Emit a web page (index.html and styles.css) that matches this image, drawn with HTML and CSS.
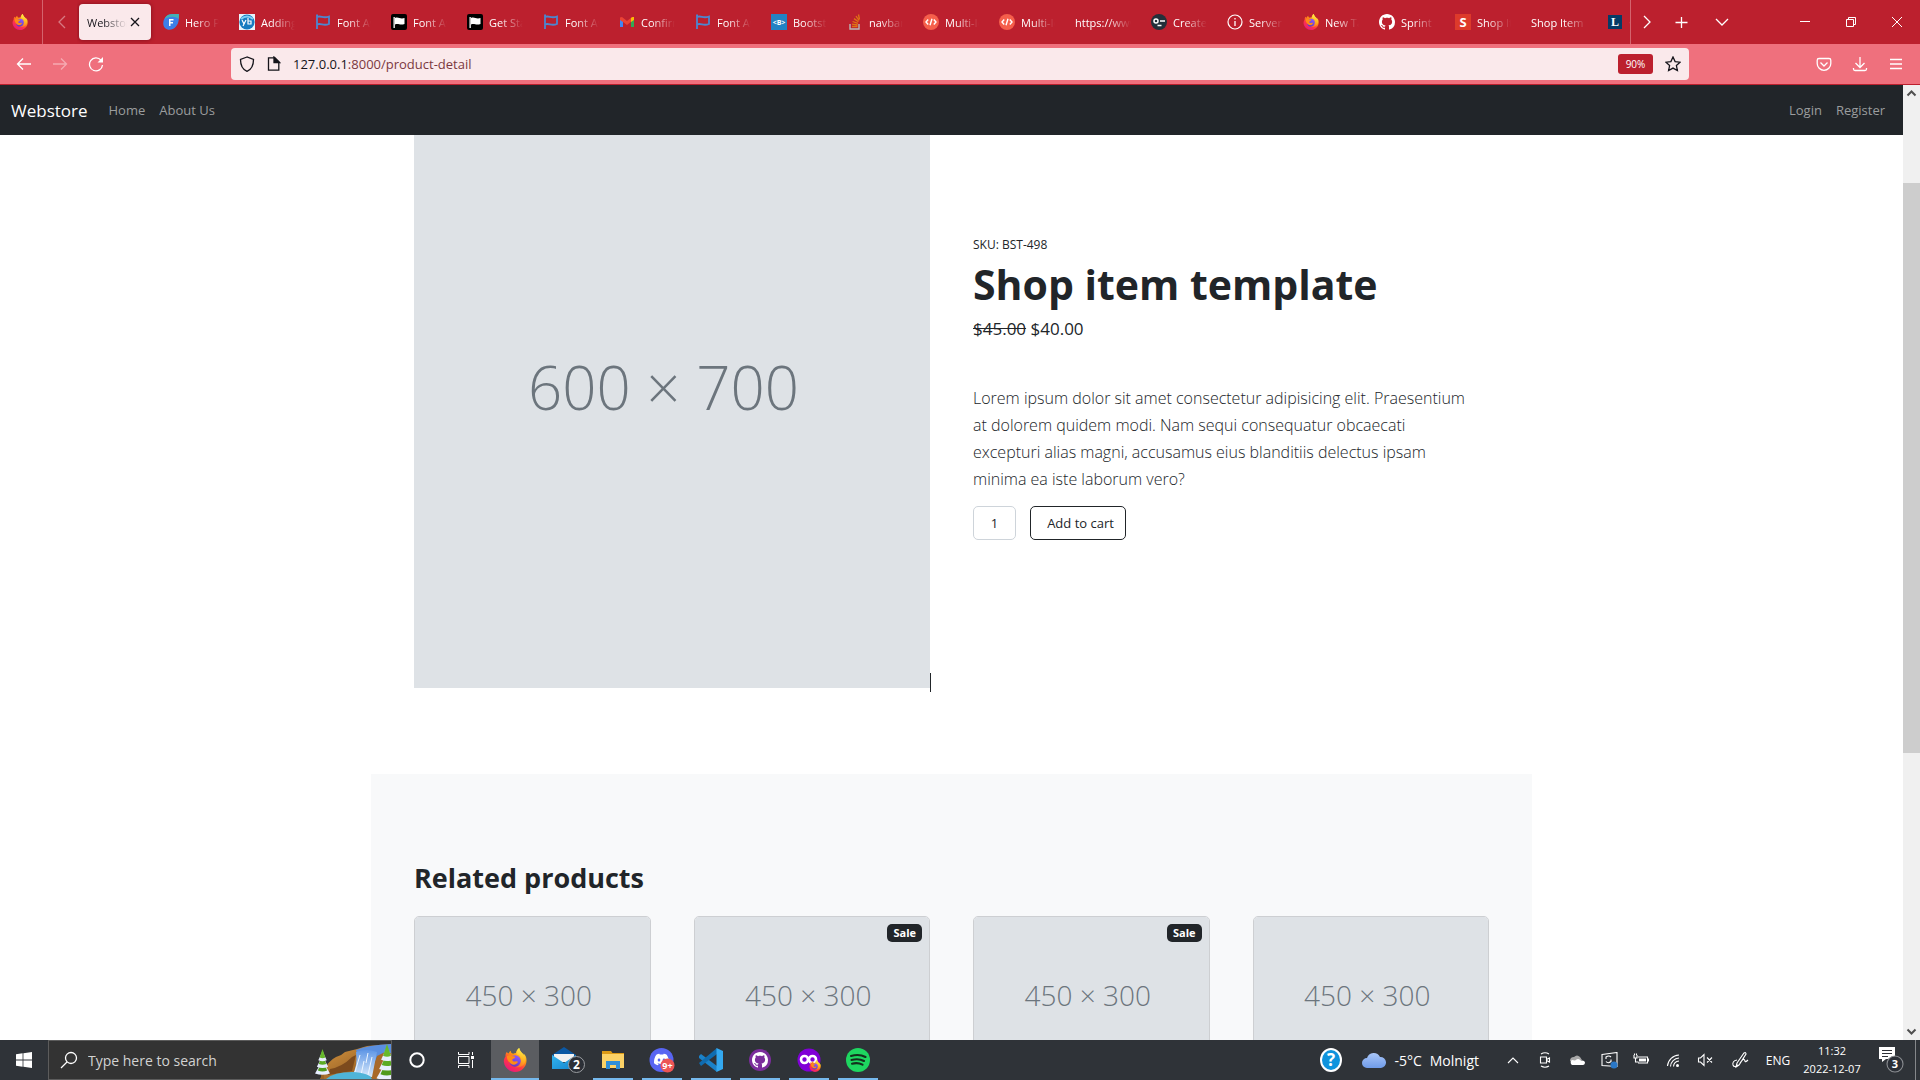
FILE: index.html
```html
<!DOCTYPE html>
<html lang="en">
<head>
<meta charset="utf-8">
<title>Webstore</title>
<link rel="stylesheet" href="styles.css">
</head>
<body>
<svg class="sprite" aria-hidden="true">
  <defs>
    <linearGradient id="fx-body" x1="0.8" y1="0" x2="0.2" y2="1">
      <stop offset="0" stop-color="#fff44f"/><stop offset="0.35" stop-color="#ff980e"/>
      <stop offset="0.65" stop-color="#ff3647"/><stop offset="1" stop-color="#e31587"/>
    </linearGradient>
    <linearGradient id="fx-flame" x1="0.6" y1="0" x2="0.4" y2="1">
      <stop offset="0" stop-color="#fff44f"/><stop offset="0.6" stop-color="#ffb01f"/><stop offset="1" stop-color="#ff6a2b"/>
    </linearGradient>
    <linearGradient id="fx-core" x1="0.7" y1="0" x2="0.3" y2="1">
      <stop offset="0" stop-color="#9059ff"/><stop offset="1" stop-color="#5b3bc4"/>
    </linearGradient>
    <linearGradient id="sky-cloud" x1="0" y1="0" x2="0" y2="1">
      <stop offset="0" stop-color="#a9c6f8"/><stop offset="1" stop-color="#6f9be8"/>
    </linearGradient>
    <linearGradient id="rock" x1="0" y1="0" x2="1" y2="1">
      <stop offset="0" stop-color="#d9983f"/><stop offset="1" stop-color="#7c4a1d"/>
    </linearGradient>
    <linearGradient id="fall" x1="0" y1="0" x2="0" y2="1">
      <stop offset="0" stop-color="#5f97e6"/><stop offset="1" stop-color="#d8e9fb"/>
    </linearGradient>
    <linearGradient id="mail-front" x1="0" y1="0" x2="1" y2="1">
      <stop offset="0" stop-color="#33b4ee"/><stop offset="1" stop-color="#1585cf"/>
    </linearGradient>
  </defs>
  <symbol id="firefox" viewBox="0 0 24 24">
    <path fill="url(#fx-body)" d="M23 9c-.6-1.500-1.800-2.900-2.700-3.400.4 1 .6 1.700.7 2.300C19.500 4.500 16.800 3.700 16.200 0c-1.800 1-3 3-3.200 5-1 .1-2 .4-2.800.8-1.800-.5-2.400-1.700-2.400-3.100-1 .5-1.700 1.600-2 2.600-.7 0-1.500-.5-2-1.300C2.700 5.200 2.300 7 2.500 8.400 1.300 10 .8 12 .8 13.600 1.400 19.500 6.200 24 12 24c6.300 0 11.400-5 11.500-11.300 0-1.300-.1-2.500-.5-3.700z"/>
    <circle cx="12" cy="13" r="5.800" fill="url(#fx-core)"/>
    <path fill="url(#fx-flame)" d="M16.200 0c-2 1.500-3.200 4-2.500 6.500 2.300.4 4.300 2.500 4.300 6 0 4-3 6.500-6 6.500 5.500 1.500 10.500-2 10.500-7.500C22.500 6 17 5 16.200 0z"/>
    <path fill="#ff8a16" d="M4 8c2-1 4-1 5.500.3 1-.1 2.500.2 2.700.9-.3 1.300-2.400 1.400-2.900 2.300-.2 1.500 1.500 2.400 3.200 1.900 1.300-.5 2-.2 2.500.4-1 2.700-4.500 3.700-7 2C5.500 14 3.500 11 4 8z"/>
  </symbol>
  <symbol id="github" viewBox="0 0 16 16"><path d="M8 0C3.580 0 0 3.580 0 8c0 3.540 2.290 6.530 5.470 7.590.4.070.55-.17.55-.38 0-.19-.01-.82-.01-1.490-2.010.37-2.530-.49-2.690-.94-.09-.23-.48-.94-.82-1.130-.28-.15-.68-.52-.01-.53.63-.01 1.080.58 1.230.82.72 1.210 1.870.87 2.330.66.07-.52.28-.87.51-1.070-1.780-.2-3.640-.89-3.640-3.950 0-.87.31-1.590.82-2.150-.08-.2-.36-1.020.08-2.120 0 0 .67-.21 2.200.82.64-.18 1.320-.27 2-.27s1.360.09 2 .27c1.530-1.040 2.200-.82 2.200-.82.44 1.100.16 1.920.08 2.120.51.56.82 1.270.82 2.150 0 3.070-1.870 3.750-3.650 3.950.29.25.54.73.54 1.480 0 1.070-.01 1.930-.01 2.200 0 .21.15.46.55.38A8.010 8.010 0 0 0 16 8c0-4.420-3.580-8-8-8z"/></symbol>
  <symbol id="flag" viewBox="0 0 16 16"><path d="M2 15V1.500h1M2 3c4-2 6 2 12-.5V10c-6 2.500-8-1.500-12 .5" fill="none" stroke="#4c86cf" stroke-width="1.800"/></symbol>
  <symbol id="flag-dark" viewBox="0 0 16 16"><rect width="16" height="16" rx="2"/><path d="M2.500 3h1.300v11H2.500zM4 4c3.500-1.500 5 1.500 9.500 0v6c-4.500 1.700-6-1-9.500.4z" fill="#fff"/></symbol>
  <symbol id="code" viewBox="0 0 16 16"><circle cx="8" cy="8" r="8" fill="#f55f4b"/><path d="M5.200 5.500 3 8l2.200 2.500M10.800 5.500 13 8l-2.200 2.500M9 4.800l-2 6.400" fill="none" stroke="#fff" stroke-width="1.400"/></symbol>
  <symbol id="tree" viewBox="0 0 16 32">
    <path fill="#9a6428" d="M6.500 25h3v7h-3z"/>
    <path fill="#e8efff" d="M8 12 0 26q8 3 16 0z"/><path fill="#4f9a1d" d="M8 12 3 23q5 2 10 0z"/>
    <path fill="#e8efff" d="M8 7 2 19q6 2.500 12 0z"/><path fill="#5cab24" d="M8 6 4 16q4 1.500 8 0z"/>
    <path fill="#e8efff" d="M8 2 3.500 12q4.500 2 9 0z"/><path fill="#67b92b" d="M8 0 5 9q3 1.500 6 0z"/>
  </symbol>
</svg>

<header class="browser">
  <div class="tabstrip">
    <div class="pinned"><svg width="16" height="16"><use href="#firefox"/></svg></div>
    <button class="scroll-tabs dim" aria-label="Scroll tabs left"><svg width="16" height="16" viewBox="0 0 16 16"><path d="M11 2 5 8l6 6"/></svg></button>
    <nav class="tabs" aria-label="Open tabs">
      <div class="tab active"><span class="tab-title">Webstore</span><button class="tab-close" aria-label="Close tab"><svg width="10" height="10" viewBox="0 0 10 10"><path d="m1 1 8 8M9 1 1 9"/></svg></button></div>
      <div class="tab"><svg width="16" height="16" viewBox="0 0 16 16"><path d="M5 1C8-.5 13 .2 16 0c-.2 4 .3 9-3 12.500C10 16 5 17 2 14-1.500 10 .5 3.500 5 1z" fill="#3d7fe8"/><path d="M5 1C8-.5 13 .2 16 0l-.3 5C12 2 8 2 1.500 5 2.500 3 3.500 1.800 5 1z" fill="#45b0b4"/><path d="M6 12V5h4.500v1.500h-3V8H10v1.400H7.500V12z" fill="#fff"/></svg><span class="tab-title">Hero Patterns</span></div>
      <div class="tab"><svg width="16" height="16" viewBox="0 0 16 16"><path fill="#e8f4fb" d="M0 0h16v16H0z"/><circle cx="8" cy="8" r="7.600" fill="#177bc0"/><path d="M2 5q6-5 12 0" stroke="#7fd0f5" stroke-width="2" fill="none"/><path d="m3 6 2 4M7 6l-3 6M9 4v6h3V7H9" stroke="#fff" stroke-width="1.200" fill="none"/></svg><span class="tab-title">Adding</span></div>
      <div class="tab"><svg width="16" height="16"><use href="#flag"/></svg><span class="tab-title">Font Awesome</span></div>
      <div class="tab"><svg width="16" height="16"><use href="#flag-dark"/></svg><span class="tab-title">Font Awesome</span></div>
      <div class="tab"><svg width="16" height="16"><use href="#flag-dark"/></svg><span class="tab-title">Get Started</span></div>
      <div class="tab"><svg width="16" height="16"><use href="#flag"/></svg><span class="tab-title">Font Awesome</span></div>
      <div class="tab"><svg width="16" height="16" viewBox="0 0 16 16"><path fill="#4285f4" d="M1 4v9h3V6z"/><path fill="#34a853" d="M12 6v7h3V4z"/><path fill="#ea4335" d="M1 3.500 3 3l5 4 5-4v4l-5 4-4-3-3-2z"/><path fill="#fbbc04" d="m12 4 1.500-1H15v3l-3 2z"/></svg><span class="tab-title">Confirm</span></div>
      <div class="tab"><svg width="16" height="16"><use href="#flag"/></svg><span class="tab-title">Font Awesome</span></div>
      <div class="tab"><svg width="16" height="16" viewBox="0 0 16 16"><path fill="#2382c4" d="M0 0h16v16H0z"/><text class="favicon-text" x="8" y="11" font-size="7">&lt;B&gt;</text></svg><span class="tab-title">Bootstrap</span></div>
      <div class="tab"><svg width="16" height="16" viewBox="0 0 16 16"><path d="M3 10v5h9v-5" fill="none" stroke="#b9b9b9" stroke-width="1.400"/><path d="M5 12.500h5.500M5 10.200l5.600.8M5.600 7.500l5.300 1.900M7 4.600l4.400 3.200M9 2l3 4.500M11.500.5l1 5" stroke="#e07414" stroke-width="1.300"/></svg><span class="tab-title">navbar</span></div>
      <div class="tab"><svg width="16" height="16"><use href="#code"/></svg><span class="tab-title">Multi-level</span></div>
      <div class="tab"><svg width="16" height="16"><use href="#code"/></svg><span class="tab-title">Multi-level</span></div>
      <div class="tab"><span class="tab-title">https://www</span></div>
      <div class="tab"><svg width="16" height="16" viewBox="0 0 16 16"><circle cx="8" cy="8" r="8" fill="#24303a"/><circle cx="5" cy="7" r="2" fill="none" stroke="#fff" stroke-width="1.500"/><path d="M9 7h5M6.500 11.500h4" stroke="#fff" stroke-width="1.500"/></svg><span class="tab-title">Create</span></div>
      <div class="tab"><svg width="16" height="16" viewBox="0 0 16 16"><circle cx="8" cy="8" r="7" fill="none" stroke="#fff" stroke-width="1.200"/><path d="M8 4v1.500M8 7v5" stroke="#fff" stroke-width="1.300"/></svg><span class="tab-title">Server error</span></div>
      <div class="tab"><svg width="16" height="16"><use href="#firefox"/></svg><span class="tab-title">New Tab</span></div>
      <div class="tab"><svg width="16" height="16" fill="#fff"><use href="#github"/></svg><span class="tab-title">Sprint</span></div>
      <div class="tab"><svg width="16" height="16" viewBox="0 0 16 16"><path fill="#dd3a2b" d="M0 0h16v16H0z"/><text class="favicon-text" x="8" y="13" font-size="13">S</text></svg><span class="tab-title">Shop Item</span></div>
      <div class="tab"><span class="tab-title">Shop Item</span></div>
      <div class="tab"><svg width="16" height="16" viewBox="0 0 16 16"><path fill="#063b66" d="M1 1h14v14H1z"/><text class="favicon-text serif" x="8" y="12" font-size="12">L</text></svg><span class="tab-title">• Lorem</span></div>
    </nav>
    <div class="tab-tools">
      <button aria-label="Scroll tabs right"><svg width="16" height="16" viewBox="0 0 16 16"><path d="m5 2 6 6-6 6"/></svg></button>
      <button aria-label="New tab"><svg width="16" height="16" viewBox="0 0 16 16"><path d="M7.500 3v11M1.500 8.500h12"/></svg></button>
      <button aria-label="List all tabs"><svg width="16" height="16" viewBox="0 0 16 16"><path d="m2 5 6 6 6-6"/></svg></button>
    </div>
    <div class="window-tools">
      <button aria-label="Minimise"><svg width="10" height="10" viewBox="0 0 10 10"><path d="M0 4.500h10"/></svg></button>
      <button aria-label="Restore"><svg width="10" height="10" viewBox="0 0 10 10"><path d="M.5 2.500h7v7h-7zM2.500 2.500v-2h7v7h-2"/></svg></button>
      <button aria-label="Close"><svg width="10" height="10" viewBox="0 0 10 10"><path d="m0 0 10 10M10 0 0 10"/></svg></button>
    </div>
  </div>
  <div class="toolbar">
    <div class="toolbar-left">
      <button aria-label="Back"><svg width="16" height="16" viewBox="0 0 16 16"><path d="M15 8H2M7 2.500 1.500 8 7 13.500"/></svg></button>
      <button class="dim" aria-label="Forward"><svg width="16" height="16" viewBox="0 0 16 16"><path d="M1 8h13M9 2.500 14.500 8 9 13.500"/></svg></button>
      <button aria-label="Reload"><svg width="16" height="16" viewBox="0 0 16 16"><path d="M14.500 9A6.500 6.500 0 1 1 13 4.200"/><path d="M9.500 6.500H15V1z" fill="#fff" stroke="none"/></svg></button>
    </div>
    <div class="urlbar">
      <svg width="16" height="16" viewBox="0 0 16 16"><path d="M8 1 1.500 3.500C1.500 9 3.500 13.500 8 15.300c4.500-1.800 6.500-6.300 6.500-11.800z"/></svg>
      <svg width="14" height="16" viewBox="1 0 14 16"><path d="M2.500 1.800h6.300l4 4v8.400H2.500z"/><path d="M8 1v5.500h5.500z" fill="#15141a"/></svg>
      <div class="url" role="textbox" aria-label="Address"><b>127.0.0.1</b>:8000/product-detail</div>
      <button class="zoom-level">90%</button>
      <svg width="16" height="16" viewBox="0 0 16 16"><path d="m8 1 2.100 4.600 5 .6-3.700 3.400 1 5L8 12.100l-4.400 2.500 1-5L.9 6.200l5-.6z"/></svg>
    </div>
    <div class="toolbar-right">
      <button aria-label="Save to Pocket"><svg width="16" height="16" viewBox="0 0 16 16"><path d="M3 2.500h10q1.800 0 1.800 1.800V7.500a6.800 6.800 0 0 1-13.600 0V4.300Q1.200 2.500 3 2.500zM4.500 6.500 8 10l3.500-3.500"/></svg></button>
      <button aria-label="Downloads"><svg width="16" height="16" viewBox="0 0 16 16"><path d="M8 1v10M3.500 7 8 11.500 12.500 7M1.500 12v1q0 1.500 1.500 1.500h10q1.500 0 1.500-1.500v-1"/></svg></button>
      <button aria-label="Menu"><svg width="16" height="16" viewBox="0 0 16 16"><path d="M2 3.500h12M2 8h12M2 12.500h12"/></svg></button>
    </div>
  </div>
</header>

<div class="viewport">
  <div class="page">
    <nav class="navbar">
      <a class="brand" href="#">Webstore</a>
      <a class="nav-link" href="#">Home</a>
      <a class="nav-link" href="#">About Us</a>
      <span class="spacer"></span>
      <a class="nav-link" href="#">Login</a>
      <a class="nav-link" href="#">Register</a>
    </nav>
    <main class="container">
      <section class="product">
        <div class="product-image">600 × 700<span class="caret"></span></div>
        <div class="product-info">
          <div class="sku">SKU: BST-498</div>
          <h1>Shop item template</h1>
          <div class="price"><s>$45.00</s> <span>$40.00</span></div>
          <p class="lead">Lorem ipsum dolor sit amet consectetur adipisicing elit. Praesentium<br>at dolorem quidem modi. Nam sequi consequatur obcaecati<br>excepturi alias magni, accusamus eius blanditiis delectus ipsam<br>minima ea iste laborum vero?</p>
          <form class="cart">
            <input type="text" value="1" aria-label="Quantity">
            <button type="button">Add to cart</button>
          </form>
        </div>
      </section>
      <section class="related">
        <h2>Related products</h2>
        <div class="cards">
          <article class="card"><div class="card-image">450 × 300</div></article>
          <article class="card"><span class="badge">Sale</span><div class="card-image">450 × 300</div></article>
          <article class="card"><span class="badge">Sale</span><div class="card-image">450 × 300</div></article>
          <article class="card"><div class="card-image">450 × 300</div></article>
        </div>
      </section>
    </main>
  </div>
  <div class="scrollbar" aria-hidden="true">
    <svg width="17" height="17" viewBox="0 0 17 17"><path d="m4.500 10.500 4-4 4 4"/></svg>
    <div class="track"><div class="thumb"></div></div>
    <svg width="17" height="17" viewBox="0 0 17 17"><path d="m4.500 6.500 4 4 4-4"/></svg>
  </div>
</div>

<footer class="taskbar">
  <button class="start" aria-label="Start"><svg width="16" height="16" viewBox="0 0 16 16"><path fill="#fff" d="M0 2.200 6.600 1.300v6.300H0zM7.400 1.200 16 0v7.600H7.400zM0 8.400h6.600v6.300L0 13.800zM7.400 8.400H16V16l-8.600-1.200z"/></svg></button>
  <div class="search">
    <svg class="lens" width="18" height="18" viewBox="0 0 18 18"><circle cx="11" cy="7" r="5.500"/><path d="M7 11 1 17"/></svg>
    <input type="text" placeholder="Type here to search" aria-label="Search">
    <svg class="scene" width="77" height="38" viewBox="0 0 77 38">
      <path fill="url(#rock)" d="M10 30q4-10 12-14 5-1 9-5l12-3 10-3 24-2v35H6z"/>
      <path fill="#7c4a1d" d="M16 28q12-2 22-12l4-2-4 16-24 4z"/>
      <path fill="#5a8fe0" d="M42 9q12-5 35-6v9l-14 4-3 6-14-2z"/>
      <path fill="#a8692a" d="m63 15 8-4v27H57z"/>
      <path fill="url(#fall)" d="M42 11q10-4 21 0l-5 25-20-2q6-8 4-23z"/>
      <path d="m46 14-5 17M50 20l-3 14M54 12l-2 10M58 16l-4 18" stroke="#eef6ff"/>
      <path fill="#4fb4d8" d="M12 38q8-7 26-7 18 1 20 7z"/>
      <use href="#tree" x="1" y="8" width="15" height="30"/>
      <use href="#tree" x="61" y="3" width="24" height="42"/>
    </svg>
  </div>
  <div class="apps">
    <button aria-label="Cortana"><svg width="16" height="16" viewBox="0 0 16 16"><circle cx="8" cy="8" r="6.700" fill="none" stroke="#fff" stroke-width="2"/></svg></button>
    <button aria-label="Task view"><svg width="16" height="16" viewBox="0 0 16 16"><path d="M.5 0v2.500h10.500V0M.5 16v-2.500h10.500V16M.5 4.500H11v7H.5zM14.500 0v3M14.500 8v8" fill="none" stroke="#fff"/><path fill="#fff" d="M13 4h3v3h-3z"/></svg></button>
    <button class="current running" aria-label="Firefox"><svg width="24" height="24"><use href="#firefox"/></svg></button>
    <button class="mail" aria-label="Mail"><svg width="34" height="28" viewBox="0 0 34 28"><path fill="#0c59a4" d="M1 9 13 1l12 8v4H1z"/><path fill="#f2f2f2" d="M3 8h20v8H3z"/><path fill="url(#mail-front)" d="m1 9 12 8 12-8v14H1z"/><circle cx="25.500" cy="18.500" r="8" fill="#2b2f36" stroke="#9a9da1"/><text class="favicon-text" x="25.500" y="23" font-size="12">2</text></svg></button>
    <button class="running" aria-label="Files"><svg width="24" height="24" viewBox="0 0 24 24"><path fill="#dc9a16" d="M1 3h9l1.500 2H23v3H1z"/><path fill="#fcd266" d="M1 6h22v14H1z"/><path fill="#2f8fd8" d="M5 13h14v8h-4v-4H9v4H5z"/></svg></button>
    <button class="running" aria-label="Discord"><svg width="26" height="26" viewBox="0 0 26 26"><circle cx="12.500" cy="13" r="12" fill="#5865f2"/><svg x="5" y="5" width="15" height="15" viewBox="0 0 16 16"><path fill="#fff" d="M13.545 2.907a13.227 13.227 0 0 0-3.257-1.011.05.05 0 0 0-.052.025c-.141.25-.297.577-.406.833a12.190 12.190 0 0 0-3.658 0 8.258 8.258 0 0 0-.412-.833.051.051 0 0 0-.052-.025c-1.125.194-2.220.534-3.257 1.011C.356 6.024-.213 9.047.066 12.032a13.276 13.276 0 0 0 4.016 2.057c.33-.44.6-.88.874-1.348l-1.276-.665.263-.28c2.619 1.196 5.454 1.196 8.094 0l.263.28-1.279.665c.24.465.515.909.874 1.348a13.235 13.235 0 0 0 4.022-2.057c.334-3.451-.559-6.449-2.372-9.125Zm-8.198 7.307c-.789 0-1.438-.724-1.438-1.612 0-.889.637-1.613 1.438-1.613.807 0 1.450.73 1.438 1.613 0 .888-.637 1.612-1.438 1.612Zm5.316 0c-.788 0-1.438-.724-1.438-1.612 0-.889.637-1.613 1.438-1.613.807 0 1.451.73 1.438 1.613 0 .888-.631 1.612-1.438 1.612Z"/></svg><circle cx="18.500" cy="18.500" r="7" fill="#ed5555"/><text class="favicon-text" x="18.500" y="22" font-size="9">9+</text></svg></button>
    <button class="running" aria-label="Code editor"><svg width="24" height="24" viewBox="0 0 24 24"><path fill="#1b82c9" d="m0 8 2-2 16 12v6L0 10z"/><path fill="#0f6cb0" d="m0 15 2 3L18 6V0z"/><path fill="#34a9f0" d="M17.500 0 24 3v18l-6.500 3z"/></svg></button>
    <button class="running" aria-label="GitHub"><svg width="24" height="24" viewBox="0 0 24 24"><circle cx="12" cy="12" r="11" fill="#7b2d9c"/><use href="#github" x="4" y="4" width="16" height="16" fill="#fff"/></svg></button>
    <button class="running" aria-label="Private browsing"><svg width="24" height="24" viewBox="0 0 24 24"><circle cx="12" cy="12" r="11.500" fill="#8000d7"/><circle cx="7.500" cy="11.500" r="3.500" fill="none" stroke="#fff" stroke-width="2.600"/><circle cx="15.500" cy="11.500" r="3.500" fill="none" stroke="#fff" stroke-width="2.600"/><use href="#firefox" x="12" y="12" width="12" height="12"/></svg></button>
    <button class="running" aria-label="Spotify"><svg width="24" height="24" viewBox="0 0 24 24"><circle cx="12" cy="12" r="12" fill="#1ed760"/><path d="M5 8q8-2.500 14.500 1M5.500 12q7-2 12.500 1M6 15.700q6-1.500 10.500 1" fill="none" stroke="#14301d" stroke-width="2.100" stroke-linecap="round"/></svg></button>
  </div>
  <div class="tray">
    <button class="w32" aria-label="Help"><svg width="22" height="24" viewBox="0 0 22 24"><ellipse cx="11" cy="12" rx="10" ry="11" fill="#0f93dd" stroke="#fff" stroke-width="2"/><text class="favicon-text" x="11" y="18" font-size="17">?</text></svg></button>
    <button class="weather"><svg width="24" height="16" viewBox="0 0 24 16"><path fill="url(#sky-cloud)" d="M5 16a5 5 0 0 1 0-10 7 7 0 0 1 13-1 5.500 5.500 0 0 1 1 11z"/></svg><span>-5°C</span><span>Molnigt</span></button>
    <button class="w32" aria-label="Show hidden icons"><svg width="16" height="16" viewBox="0 0 16 16"><path d="m3 11 5-5 5 5"/></svg></button>
    <button class="w32" aria-label="Meet now"><svg width="16" height="16" viewBox="0 0 16 16"><path d="M3.500 5h6v6h-6zM9.500 7.500l3-1.500v4l-3-1.500M4 2q4-2.500 8 0M4 14q4 2.500 8 0"/></svg></button>
    <button class="w32" aria-label="OneDrive"><svg width="16" height="16" viewBox="0 0 16 16"><path fill="#a8a8a8" stroke="none" d="M1 9a4 4 0 0 1 4-4q3-3 6 0l2 3-9 3z"/><path fill="#fff" stroke="none" d="M3 13a3 3 0 0 1 0-5l3 .5q3-3 6 0 4-.5 4 2.500-.5 2-2 2z"/></svg></button>
    <button class="w32" aria-label="Update"><svg width="17" height="17" viewBox="0 0 17 17"><path d="M1 2.500 16 .5v14l-15-1zM5 9.500q2 2.500 5 0v-2M5 7V5q3-2 5 0"/><circle cx="13" cy="13" r="3.500" fill="#2a78c8" stroke="none"/></svg></button>
    <button class="w32" aria-label="Battery"><svg width="16" height="16" viewBox="0 0 16 16"><path d="M5 5h9.500v6H5M15.500 6.500v3M1 3v3h3V3M1.500 1.500V3M3.500 1.500V3M2.500 6v4h3"/><path fill="#fff" stroke="none" d="M6 6.500h7v3H6z"/></svg></button>
    <button class="w32" aria-label="Network"><svg width="16" height="16" viewBox="0 0 16 16"><path d="M2.500 14A12 12 0 0 1 14 3M5.500 14.500A9 9 0 0 1 14 6M8.500 14.500a6 6 0 0 1 5.500-5.500"/><circle cx="12.500" cy="13.500" r="1.500" fill="#fff" stroke="none"/></svg></button>
    <button class="w32" aria-label="Volume muted"><svg width="16" height="16" viewBox="0 0 16 16"><path d="M1.500 6h2l3.500-3.500v11L3.500 10h-2zM10 5.500l5 5M15 5.500l-5 5"/></svg></button>
    <button class="w38" aria-label="Pen"><svg width="18" height="18" viewBox="0 0 18 18"><path d="M6 12 13 2q2-1 2 1L8 14l-3 2zM6 9q-5 1-4 5 1 3 5 0M9 12q4-6 5-2 0 2 3-1"/></svg></button>
    <button class="w38">ENG</button>
    <div class="clock"><span>11:32</span><span>2022-12-07</span></div>
    <button class="notify" aria-label="Notifications"><svg width="26" height="26" viewBox="0 0 26 26"><path fill="#fff" stroke="none" d="M1 0h16v12H8l-4 3v-3H1z"/><path d="M4 3.500h10M4 6.500h10M4 9.500h6" stroke="#2f3237"/><circle cx="17" cy="17" r="8" fill="#2b2f36" stroke="#8a8d91"/><text class="favicon-text" x="17" y="21" font-size="11">3</text></svg></button>
    <button class="show-desktop" aria-label="Show desktop"></button>
  </div>
</footer>
</body>
</html>
```
FILE: styles.css
```css
* { box-sizing: border-box; }
body {
  margin: 0;
  height: 100vh;
  display: flex;
  flex-direction: column;
  overflow: hidden;
  background: #fff;
  color: #212529;
  font-family: "Open Sans", "Noto Sans", sans-serif;
}
button {
  margin: 0;
  padding: 0;
  border: 0;
  background: none;
  color: inherit;
  font: inherit;
  display: flex;
  align-items: center;
  justify-content: center;
}
svg { flex: none; display: block; }
.sprite { position: absolute; width: 0; height: 0; }
.favicon-text { fill: #fff; stroke: none; font-weight: 700; text-anchor: middle; }
.favicon-text.serif { font-family: "Liberation Serif", serif; }

/* browser chrome */
.browser { flex: none; }
.tabstrip {
  height: 44px;
  display: flex;
  background: #bc202e;
  color: #fff;
  font-size: 11px;
}
.tabstrip button svg, .toolbar button svg { fill: none; stroke: #fff; stroke-width: 1.3; }
.pinned { width: 43px; padding-left: 12px; display: flex; align-items: center; border-right: 1px solid #d4636d; }
.scroll-tabs { width: 34px; padding-left: 3px; }
.dim { opacity: 0.4; }
.tabs { flex: 1; min-width: 0; display: flex; overflow: hidden; }
.tab {
  flex: none;
  width: 72px;
  height: 36px;
  margin: 4px 2px;
  padding: 0 8px;
  display: flex;
  align-items: center;
  gap: 6px;
  border-radius: 4px;
}
.tab-title {
  flex: 1;
  min-width: 0;
  overflow: hidden;
  white-space: nowrap;
  mask-image: linear-gradient(to left, transparent, #000 24px);
}
.active { background: #fae9eb; color: #15141a; gap: 0; box-shadow: 0 0 4px #80101c; }
.tabstrip .tab-close svg { stroke: #15141a; }
.tab-close { width: 16px; height: 16px; }
.tab-tools { display: flex; width: 152px; border-left: 1px solid #d4636d; }
.tab-tools button { width: 40px; }
.tab-tools button:first-child { width: 31px; }
.window-tools { display: flex; }
.window-tools button { width: 46px; }
.tabstrip .window-tools svg { stroke-width: 1; }

.toolbar {
  height: 41px;
  display: grid;
  grid-template-columns: 231px 1fr 231px;
  padding: 4px 0;
  background: #ef707d;
  border-bottom: 1px solid #bc202e;
}
.toolbar-left, .toolbar-right { display: flex; padding: 0 6px; }
.toolbar-right { justify-content: flex-end; }
.toolbar button { width: 36px; height: 32px; }
.urlbar {
  height: 32px;
  display: flex;
  align-items: center;
  gap: 12px;
  padding: 0 8px;
  border-radius: 4px;
  background: #fae9eb;
  fill: none;
  stroke: #15141a;
  stroke-width: 1.3;
}
.url { flex: 1; font-size: 13px; color: #7b3840; }
.url b { font-weight: 400; color: #15141a; }
.toolbar .zoom-level { width: 35px; height: 20px; border-radius: 3px; background: #bc202e; color: #fff; font-size: 10px; }

/* page viewport */
.viewport { flex: 1; min-height: 0; display: flex; }
.page { flex: 1; min-width: 0; overflow: hidden; }
.navbar {
  position: sticky;
  top: 0;
  z-index: 1;
  height: 50px;
  margin-bottom: -49px;
  padding: 0 11px;
  display: flex;
  align-items: center;
  background: #212529;
  font-size: 13px;
}
.navbar a { text-decoration: none; }
.brand { margin-right: 14px; color: #fff; font-size: 17px; }
.nav-link { padding: 0 7px; color: #9b9d9e; }
.spacer { flex: 1; }
.container { max-width: 1161px; margin: 0 auto; }
.product {
  padding: 0 43px 86px;
  display: grid;
  grid-template-columns: 1fr 1fr;
  gap: 43px;
  align-items: center;
}
.product-image {
  position: relative;
  aspect-ratio: 6 / 7;
  display: flex;
  align-items: center;
  justify-content: center;
  padding-right: 17px;
  background: #dee2e6;
  color: #6c757d;
  font-size: 60px;
  font-weight: 300;
}
.caret { position: absolute; right: -1px; bottom: -4px; width: 1px; height: 19px; background: #212529; }
.sku { margin-bottom: 4px; font-size: 12px; line-height: 19px; }
h1 { margin: 0 0 5px; font-size: 41px; line-height: 52px; font-weight: 700; }
.price { margin-bottom: 43px; font-size: 17px; line-height: 27px; }
.lead { margin: 0 0 13px; font-size: 16px; line-height: 27px; font-weight: 300; white-space: nowrap; }
.cart { display: flex; gap: 14px; }
.cart input, .cart button {
  height: 34px;
  border: 1px solid #ced4da;
  border-radius: 5px;
  background: #fff;
  color: #212529;
  font: 13px/20px "Open Sans", "Noto Sans", sans-serif;
}
.cart input { width: 43px; padding: 0; text-align: center; }
.cart button { width: 96px; padding-left: 5px; border-color: #212529; }
.related { padding: 86px 43px; background: #f8f9fa; }
h2 { margin: 0 0 21px; font-size: 27px; line-height: 35px; font-weight: 700; }
.cards { display: grid; grid-template-columns: repeat(4, 1fr); gap: 43px; }
.card { position: relative; height: 340px; border: 1px solid #cdcfd2; border-radius: 5px; background: #fff; overflow: hidden; }
.card-image {
  aspect-ratio: 3 / 2;
  display: flex;
  align-items: center;
  justify-content: center;
  padding-right: 7px;
  background: #dee2e6;
  color: #6c757d;
  font-size: 28px;
  font-weight: 300;
}
.badge {
  position: absolute;
  top: 7px;
  right: 7px;
  padding: 0 6px;
  border-radius: 5px;
  background: #212529;
  color: #fff;
  font-size: 11px;
  line-height: 18px;
  font-weight: 700;
}
.scrollbar { width: 17px; display: flex; flex-direction: column; background: #f0f0f0; fill: none; stroke: #505050; stroke-width: 2; }
.track { flex: 1; display: grid; grid-template-rows: 81fr 570fr 270fr; }
.thumb { grid-row: 2; background: #cdcdcd; }

/* taskbar */
.taskbar { flex: none; height: 40px; display: flex; background: #2f3338; color: #fff; }
.start { width: 48px; }
.search {
  width: 344px;
  display: flex;
  align-items: center;
  padding-left: 11px;
  border: 1px solid #5c5c5c;
  background: #333;
}
.lens { fill: none; stroke: #fff; stroke-width: 1.3; }
.search input {
  flex: 1;
  min-width: 0;
  padding: 0 0 0 10px;
  border: 0;
  background: none;
  color: #fff;
  font: 14px "Open Sans", "Noto Sans", sans-serif;
}
.search input::placeholder { color: #d2d2d2; opacity: 1; }
.apps { display: flex; gap: 1px; margin-left: 1px; }
.apps button { width: 48px; position: relative; }
.apps .mail { padding-left: 8px; }
.running::after { content: ""; position: absolute; left: 4px; right: 4px; bottom: 0; height: 2px; background: #76b9ed; }
.current { background: #5b5d61; }
.current::after { left: 0; right: 0; }
.tray { margin-left: auto; display: flex; font-size: 14px; }
.tray svg { fill: none; stroke: #fff; stroke-width: 1.1; }
.w32 { width: 32px; }
.w38 { width: 38px; font-size: 12px; }
.tray .weather { padding: 0 18px 0 15px; gap: 8px; }
.weather svg { stroke: none; }
.clock { width: 70px; display: flex; flex-direction: column; justify-content: center; text-align: center; font-size: 11px; line-height: 18px; }
.tray .notify { width: 48px; }
.show-desktop { width: 5px; border-left: 1px solid #85878a; }
```
